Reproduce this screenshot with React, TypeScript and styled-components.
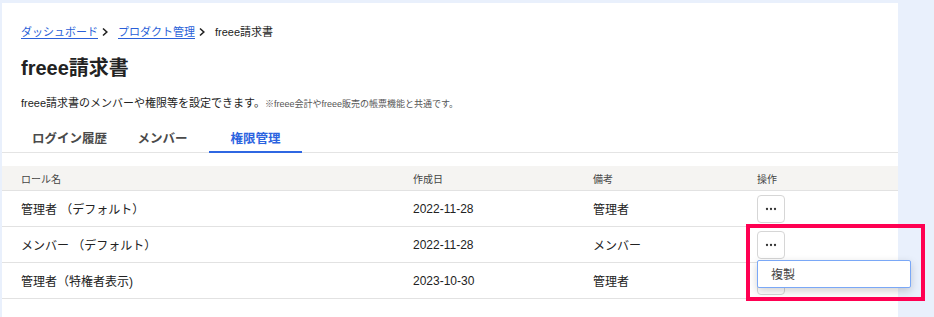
import React from "react";
import styled, { createGlobalStyle } from "styled-components";

const Global = createGlobalStyle`
  html, body { margin: 0; padding: 0; }
  body {
    background: #e9f0fc;
    font-family: "Liberation Sans", "Noto Sans CJK JP", sans-serif;
    color: #222;
    overflow: hidden;
  }
`;

const Page = styled.div`
  width: 934px;
  height: 317px;
  box-sizing: border-box;
  padding: 3px 0 0 2px;
`;

const Panel = styled.div`
  width: 896px;
  height: 314px;
  background: #fff;
  padding-top: 21px;
  box-sizing: border-box;
`;

const Section = styled.div`
  padding: 0 19px;
`;

const Breadcrumb = styled.nav`
  display: flex;
  align-items: center;
  font-size: 11px;
  line-height: 16px;
  color: #222;
`;

const Crumb = styled.a`
  color: #2a5fd8;
  text-decoration: underline;
  text-underline-offset: 2px;
`;

const Chevron = styled.svg`
  width: 10px;
  height: 10px;
  margin: 0 8px 0 2px;
`;

const Title = styled.h1`
  margin: 14px 0 0;
  font-size: 20px;
  line-height: 28px;
  font-weight: 700;
  color: #222;
`;

const Desc = styled.p`
  margin: 13px 0 0;
  font-size: 11px;
  line-height: 16px;
  color: #222;
`;

const Note = styled.span`
  font-size: 9px;
  color: #555;
`;

const TabBar = styled.div`
  display: flex;
  margin-top: 10px;
  padding-left: 21px;
  border-bottom: 1px solid #e4e4e4;
`;

const Tab = styled.div<{ $active?: boolean }>`
  width: 93px;
  text-align: center;
  padding: 8px 0 3px;
  line-height: 18px;
  font-size: 12.5px;
  font-weight: 700;
  color: ${(p) => (p.$active ? "#2b63e0" : "#4a4a4a")};
  border-bottom: 2px solid ${(p) => (p.$active ? "#2f67e2" : "transparent")};
  margin-bottom: -1px;
`;

const Table = styled.div`
  margin-top: 13px;
`;

const Row = styled.div<{ $head?: boolean }>`
  display: grid;
  grid-template-columns: 392px 180px 164px 1fr;
  align-items: center;
  padding-left: 19px;
  height: ${(p) => (p.$head ? "24px" : "35px")};
  background: ${(p) => (p.$head ? "#f5f4f2" : "#fff")};
  border-bottom: 1px solid #e2e2e2;
  font-size: ${(p) => (p.$head ? "10px" : "12px")};
  color: ${(p) => (p.$head ? "#444" : "#222")};
`;

const ActionWrap = styled.div`
  position: relative;
  width: 28px;
  height: 28px;
`;

const MoreButton = styled.button`
  width: 28px;
  height: 28px;
  padding: 0;
  border: 1px solid #d6d6d6;
  border-radius: 4px;
  background: #fff;
  display: flex;
  align-items: center;
  justify-content: center;
  box-sizing: border-box;
`;

const Menu = styled.div`
  position: absolute;
  top: 29px;
  left: 0;
  width: 154px;
  height: 28px;
  box-sizing: border-box;
  background: #fff;
  border: 1px solid #7aa8f7;
  border-radius: 2px;
  box-shadow: 0 3px 8px rgba(0, 0, 0, 0.18);
  display: flex;
  align-items: center;
  padding-left: 13px;
  font-size: 12px;
  color: #444;
  z-index: 2;
`;

const Highlight = styled.div`
  position: absolute;
  left: -11px;
  top: -7px;
  width: 179px;
  height: 77px;
  box-sizing: border-box;
  border: 4px solid #ff0052;
  pointer-events: none;
  z-index: 3;
`;

const Dots = () => (
  <svg width="14" height="4" viewBox="0 0 14 4">
    <circle cx="3" cy="2" r="1.15" fill="#333" />
    <circle cx="7" cy="2" r="1.15" fill="#333" />
    <circle cx="11" cy="2" r="1.15" fill="#333" />
  </svg>
);

const Sep = () => (
  <Chevron viewBox="0 0 10 10">
    <path d="M3 1.5 L6.8 5 L3 8.5" fill="none" stroke="#222" strokeWidth="1.6" />
  </Chevron>
);

const rows = [
  { name: "管理者 （デフォルト）", date: "2022-11-28", note: "管理者" },
  { name: "メンバー （デフォルト）", date: "2022-11-28", note: "メンバー", open: true },
  { name: "管理者（特権者表示)", date: "2023-10-30", note: "管理者" },
];

export default function App() {
  return (
    <>
      <Global />
      <Page>
        <Panel>
          <Section>
            <Breadcrumb>
              <Crumb>ダッシュボード</Crumb>
              <Sep />
              <Crumb>プロダクト管理</Crumb>
              <Sep />
              <span>freee請求書</span>
            </Breadcrumb>
            <Title>freee請求書</Title>
            <Desc>
              freee請求書のメンバーや権限等を設定できます。
              <Note>※freee会計やfreee販売の帳票機能と共通です。</Note>
            </Desc>
          </Section>
          <TabBar>
            <Tab>ログイン履歴</Tab>
            <Tab>メンバー</Tab>
            <Tab $active>権限管理</Tab>
          </TabBar>
          <Table>
            <Row $head>
              <div>ロール名</div>
              <div>作成日</div>
              <div>備考</div>
              <div>操作</div>
            </Row>
            {rows.map((r) => (
              <Row key={r.name}>
                <div>{r.name}</div>
                <div>{r.date}</div>
                <div>{r.note}</div>
                <div>
                  <ActionWrap>
                    <MoreButton>
                      <Dots />
                    </MoreButton>
                    {r.open && (
                      <>
                        <Menu>複製</Menu>
                        <Highlight />
                      </>
                    )}
                  </ActionWrap>
                </div>
              </Row>
            ))}
          </Table>
        </Panel>
      </Page>
    </>
  );
}
